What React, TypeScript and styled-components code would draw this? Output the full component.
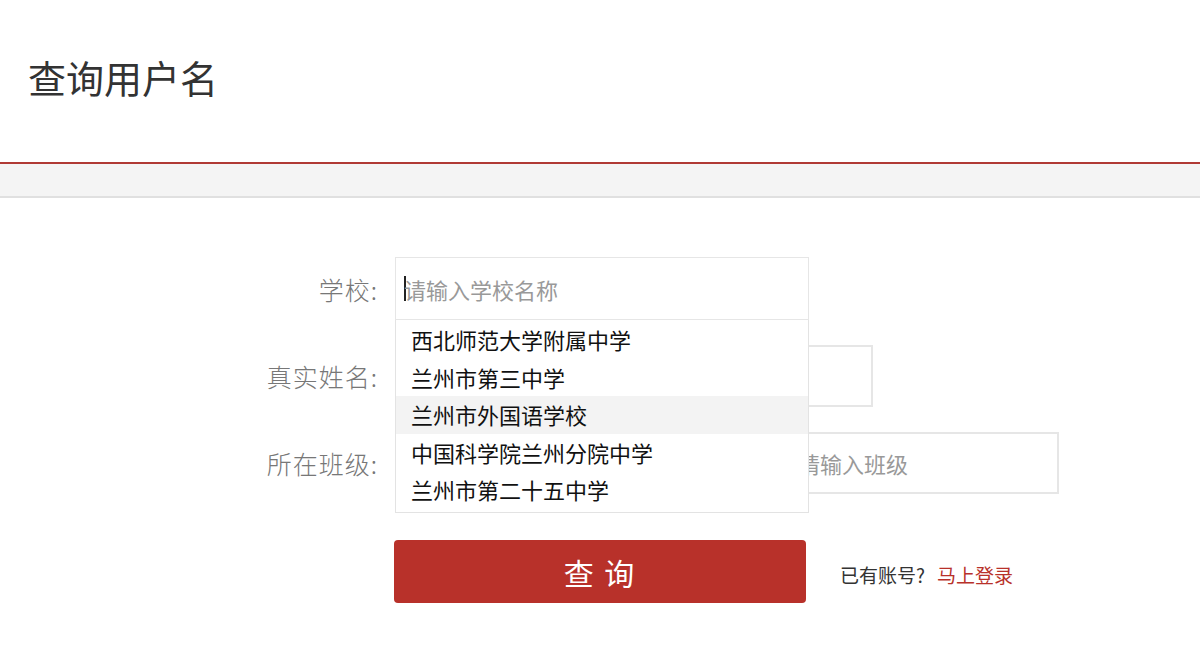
import React, { useState } from 'react';
import styled, { createGlobalStyle } from 'styled-components';

const GlobalStyle = createGlobalStyle`
  html, body {
    margin: 0;
    padding: 0;
    background: #fff;
    font-family: "Noto Sans CJK SC", "Noto Sans", sans-serif;
  }
`;

const schools = ['西北师范大学附属中学', '兰州市第三中学', '兰州市外国语学校', '中国科学院兰州分院中学', '兰州市第二十五中学'];

const App = () => {
  const [hovered] = useState(2);

  return (
    <Page>
      <GlobalStyle />
      <Header>
        <Title>查询用户名</Title>
      </Header>
      <Band />
      <Form>
        <Row>
          <Label>学校:</Label>
          <Field>
            <SchoolInput>
              <Caret />
              <Placeholder>请输入学校名称</Placeholder>
            </SchoolInput>
            <Dropdown>
              {schools.map((name, i) => (
                <Option key={name} active={i === hovered}>
                  {name}
                </Option>
              ))}
            </Dropdown>
          </Field>
        </Row>
        <Row>
          <Label>真实姓名:</Label>
          <Input width={478} />
        </Row>
        <Row>
          <Label>所在班级:</Label>
          <ClassGroup>
            <Input width={385} />
            <Input width={269}>
              <Placeholder>请输入班级</Placeholder>
            </Input>
          </ClassGroup>
        </Row>
        <ActionRow>
          <SubmitButton>查&nbsp;询</SubmitButton>
          <LoginHint>
            已有账号?<LoginLink>马上登录</LoginLink>
          </LoginHint>
        </ActionRow>
      </Form>
    </Page>
  );
};

const Page = styled.div`
  width: 1200px;
  height: 645px;
  overflow: hidden;
  background: #fff;
`;

const Header = styled.div`
  height: 162px;
  padding-left: 28px;
  border-bottom: 2px solid #b03a35;
`;

const Title = styled.h1`
  margin: 0;
  padding-top: 52px;
  font-size: 38px;
  line-height: 50px;
  font-weight: 400;
  color: #333;
`;

const Band = styled.div`
  height: 32px;
  background: #f4f4f4;
  border-bottom: 2px solid #e0e0e0;
`;

const Form = styled.div`
  padding-top: 59px;
  padding-left: 248px;
  display: flex;
  flex-direction: column;
  gap: 25px;
`;

const Row = styled.div`
  display: flex;
  align-items: center;
  gap: 17px;
`;

const Label = styled.div`
  width: 130px;
  text-align: right;
  font-size: 25px;
  letter-spacing: 1px;
  color: #777;
  font-weight: 300;
`;

const Field = styled.div`
  position: relative;
  z-index: 2;
`;

const Input = styled.div<{ width: number }>`
  width: ${(p) => p.width}px;
  height: 62px;
  box-sizing: border-box;
  border: 2px solid #e6e6e6;
  display: flex;
  align-items: center;
  padding-left: 6px;
  background: #fff;
`;

const SchoolInput = styled.div`
  width: 414px;
  height: 63px;
  box-sizing: border-box;
  border: 1px solid #e6e6e6;
  display: flex;
  align-items: center;
  padding-left: 8px;
  background: #fff;
`;

const Caret = styled.span`
  width: 2px;
  height: 25px;
  background: #222;
  margin-right: -2px;
`;

const Placeholder = styled.span`
  font-size: 22px;
  color: #999;
`;

const Dropdown = styled.div`
  position: absolute;
  top: 63px;
  left: 0;
  width: 414px;
  box-sizing: border-box;
  border: 1px solid #e3e3e3;
  border-top: none;
  background: #fff;
  padding: 1px 0 3px;
`;

const Option = styled.div<{ active: boolean }>`
  height: 37.5px;
  line-height: 37.5px;
  padding-left: 15px;
  font-size: 22px;
  color: #111;
  background: ${(p) => (p.active ? '#f3f3f3' : '#fff')};
`;

const ClassGroup = styled.div`
  display: flex;
  gap: 10px;
`;

const ActionRow = styled.div`
  display: flex;
  align-items: center;
  margin-left: 146px;
  margin-top: 21px;
  gap: 34px;
`;

const SubmitButton = styled.button`
  width: 412px;
  height: 63px;
  border: none;
  border-radius: 4px;
  background: #b8312a;
  color: #fff;
  font-family: inherit;
  font-size: 30px;
  letter-spacing: 2px;
  cursor: pointer;
`;

const LoginHint = styled.div`
  font-size: 19px;
  color: #333;
  padding-top: 6px;
`;

const LoginLink = styled.span`
  color: #b8312a;
  margin-left: 12px;
  cursor: pointer;
`;

export default App;
